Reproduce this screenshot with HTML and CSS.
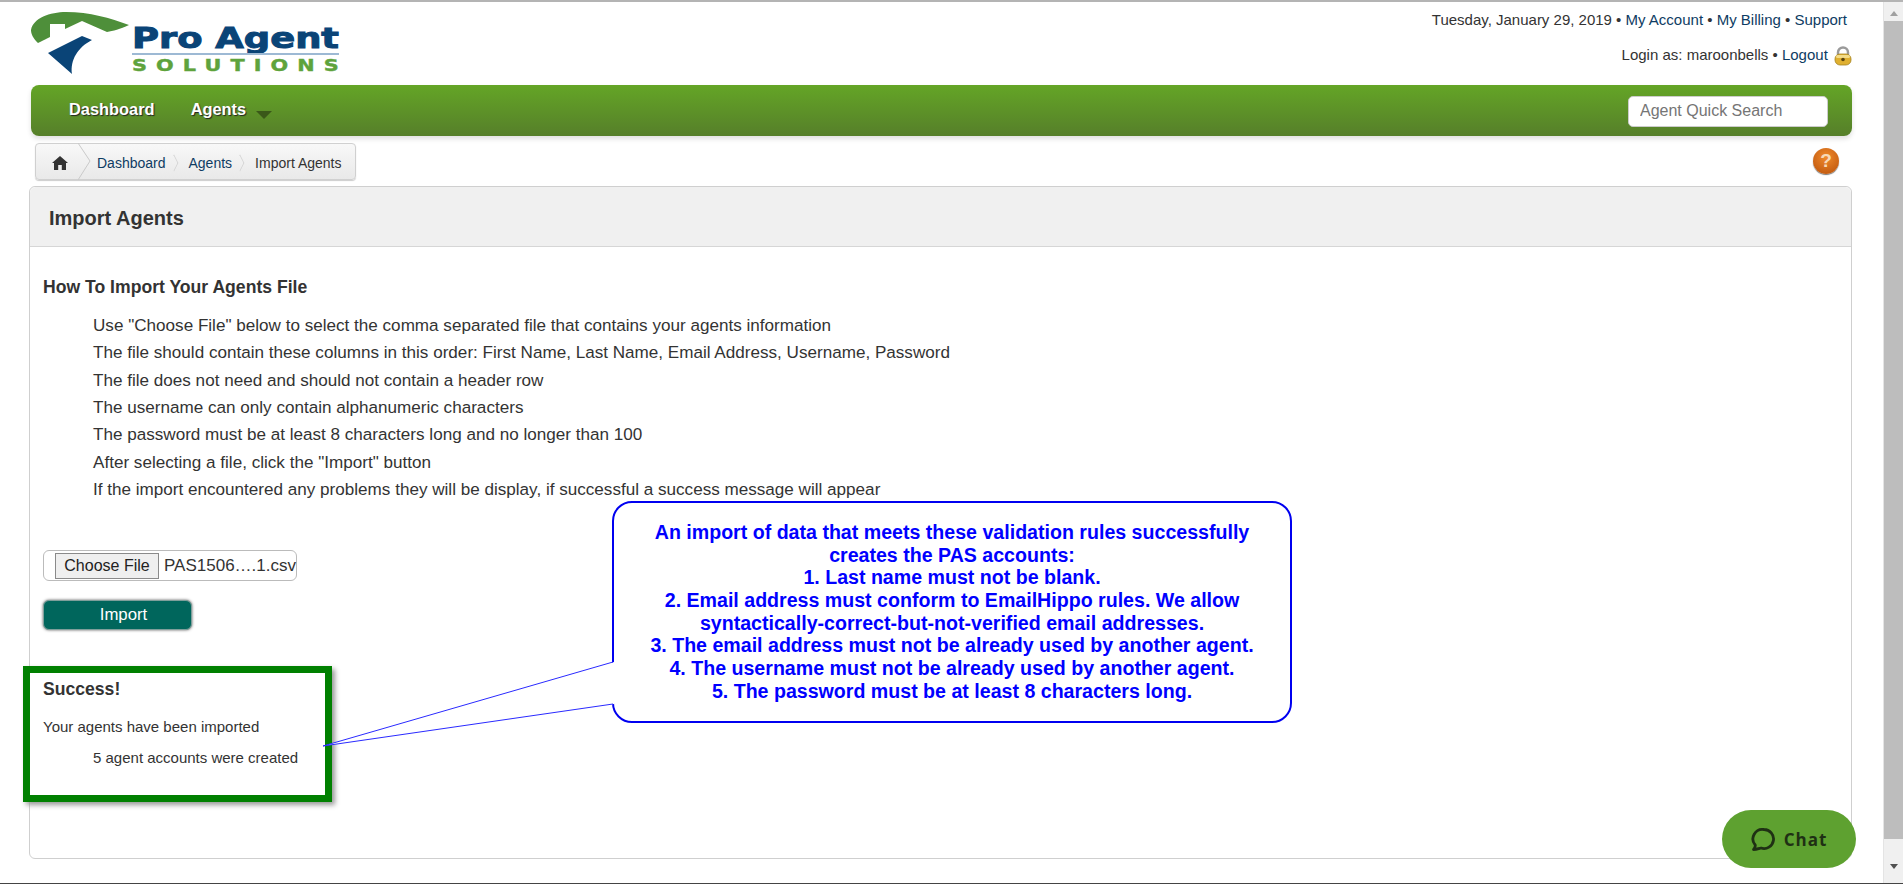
FILE: index.html
```html
<!DOCTYPE html>
<html>
<head lang="en">
    <meta charset="UTF-8">
    <title>Import Agents</title>
    <link rel="stylesheet" href="styles.css">
</head>
<body>
<div class="page">
    <div class="top">
        <svg class="logo" width="312" height="66" viewBox="30 10 312 66">
            <path fill="#4e8f3a" d="M31,30 C33,18 50,12 66,12 C90,12 110,18 129,25 C120,29 113,31 107,32 L82,21 L65,29 L65,24 L50,24 L50,37 L38,43 C33,38 31,34 31,30 Z"/>
            <path fill="#0a4477" d="M48,53 L82,36 L92,40 C78,47 70,60 72,74 Z"/>
            <text class="logo-pro" x="132" y="48" textLength="207" lengthAdjust="spacingAndGlyphs">Pro Agent</text>
            <rect x="132" y="53" width="207" height="2" fill="#9db9d4"/>
            <text class="logo-sol" transform="translate(132 71) scale(1.300 1)" textLength="159">SOLUTIONS</text>
        </svg>
        <div class="account">
            <div class="account-row">Tuesday, January 29, 2019 • <a href="#">My Account</a> • <a href="#">My Billing</a> • <a href="#">Support</a></div>
            <div class="account-row login">Login as: maroonbells • <a href="#">Logout</a>
                <svg width="18" height="20" viewBox="0 0 18 20">
                    <path d="M4,10 V6.500 a5,5 0 0 1 10,0 V10" fill="none" stroke="#9a9a9a" stroke-width="2.500"/>
                    <rect x="1" y="8" width="16" height="11" rx="5" fill="#e0b030" stroke="#a58320" stroke-width="0.800"/>
                    <rect x="2" y="9" width="14" height="3" rx="1.500" fill="#f4dc88"/>
                    <circle cx="9" cy="13.500" r="1.800" fill="#5a4410"/>
                </svg>
            </div>
        </div>
    </div>

    <div class="nav">
        <a class="nav-item" href="#">Dashboard</a>
        <a class="nav-item" href="#">Agents</a>
        <span class="nav-arrow"></span>
        <input class="quick-search" type="text" placeholder="Agent Quick Search">
    </div>

    <div class="crumb-row">
        <div class="crumbs">
            <span class="crumb-home">
                <svg width="16" height="14" viewBox="0 0 16 14">
                    <path fill="#333" d="M8,0 L16,7 L14,7 L14,14 L9.800,14 L9.800,9 L6.200,9 L6.200,14 L2,14 L2,7 L0,7 Z"/>
                </svg>
            </span>
            <svg class="crumb-bigsep" width="14" height="37" viewBox="0 0 14 37">
                <path d="M0,0 L12,18 L0,37" fill="none" stroke="#c9c9c9"/>
            </svg>
            <a href="#">Dashboard</a>
            <span class="crumb-sep"></span>
            <a href="#">Agents</a>
            <span class="crumb-sep"></span>
            <span>Import Agents</span>
        </div>
        <span class="help">?</span>
    </div>

    <div class="panel">
        <div class="panel-head">Import Agents</div>
        <div class="panel-body">
            <h3 class="howto">How To Import Your Agents File</h3>
            <ul class="rules">
                <li>Use "Choose File" below to select the comma separated file that contains your agents information</li>
                <li>The file should contain these columns in this order: First Name, Last Name, Email Address, Username, Password</li>
                <li>The file does not need and should not contain a header row</li>
                <li>The username can only contain alphanumeric characters</li>
                <li>The password must be at least 8 characters long and no longer than 100</li>
                <li>After selecting a file, click the "Import" button</li>
                <li>If the import encountered any problems they will be display, if successful a success message will appear</li>
            </ul>
            <div class="file-field">
                <button class="file-btn" type="button">Choose File</button>
                <span class="file-name">PAS1506….1.csv</span>
            </div>
            <button class="import-btn" type="button">Import</button>
            <div class="result">
                <h3 class="result-title">Success!</h3>
                <p class="result-msg">Your agents have been imported</p>
                <p class="result-count">5 agent accounts were created</p>
            </div>
        </div>
    </div>

    <div class="callout">
        An import of data that meets these validation rules successfully<br>
        creates the PAS accounts:<br>
        1. Last name must not be blank.<br>
        2. Email address must conform to EmailHippo rules. We allow<br>
        syntactically-correct-but-not-verified email addresses.<br>
        3. The email address must not be already used by another agent.<br>
        4. The username must not be already used by another agent.<br>
        5. The password must be at least 8 characters long.
    </div>
    <svg class="tail" width="294" height="90" viewBox="0 0 294 90">
        <path d="M292,1 L1,85 L292,43 Z" fill="#fff"/>
        <path d="M291,1 L1,85 L291,43" fill="none" stroke="#2a2aff" stroke-width="1"/>
    </svg>

    <a class="chat" href="#">
        <svg width="24" height="24" viewBox="0 0 24 24">
            <path d="M13,2.500 a9.500,9.500 0 1 1 -3,18.500 C8,21.500 5,22.500 2.500,22.500 C4,21 4.500,19.500 4.200,18 A9.500,9.500 0 0 1 13,2.500 Z" fill="none" stroke="#1f3014" stroke-width="2.800" stroke-linejoin="round"/>
        </svg>
        Chat
    </a>
</div>
<div class="scrollbar">
    <span class="scroll-up"></span>
    <span class="scroll-thumb"></span>
    <span class="scroll-down"></span>
</div>
</body>
</html>
```

FILE: styles.css
```css
* {
    margin: 0;
    padding: 0;
    box-sizing: border-box;
}
html, body {
    height: 884px;
    overflow: hidden;
}
body {
    display: flex;
    background: #fff;
    border-top: 2px solid #b4b4b4;
    border-bottom: 1px solid #444;
    font-family: "Liberation Sans", Arial, sans-serif;
    font-size: 15px;
    color: #333;
}
a {
    color: #0e3c63;
    text-decoration: none;
}

.page {
    position: relative;
    flex: 1;
    padding: 0 31px 0 29px;
}

/* header */
.top {
    display: flex;
    justify-content: space-between;
    height: 83px;
}
.logo {
    margin: 8px 0 0 1px;
}
.logo-pro {
    font: bold 29px "DejaVu Sans", sans-serif;
    fill: #0a4477;
    stroke: #0a4477;
    stroke-width: 1;
}
.logo-sol {
    font: bold 16px "DejaVu Sans", sans-serif;
    fill: #5ea33c;
    stroke: #5ea33c;
    stroke-width: 0.400;
}
.account {
    text-align: right;
}
.account-row {
    height: 34px;
    padding: 10px 5px 0 0;
    line-height: 16px;
}
.account-row.login {
    padding: 10px 0 0 0;
}
.login svg {
    vertical-align: -6px;
    margin-left: 2px;
}

/* nav bar */
.nav {
    display: flex;
    align-items: center;
    height: 51px;
    margin-left: 2px;
    padding: 0 24px 0 38px;
    border-radius: 8px;
    background: linear-gradient(#64a526, #567f2a);
    box-shadow: 0 3px 5px rgba(0, 0, 0, 0.12);
}
.nav-item {
    margin: 0 36px 3px 0;
    color: #fff;
    font-size: 16.400px;
    font-weight: bold;
    text-shadow: 1px 1px 1px #222;
}
.nav-arrow {
    width: 0;
    height: 0;
    margin: 8px 0 0 -26px;
    border: 8px solid transparent;
    border-top-color: #3a5819;
    border-bottom: 0;
}
.quick-search {
    width: 200px;
    height: 31px;
    margin: 1px 0 0 auto;
    padding: 0 11px;
    border: 1px solid #ccc;
    border-radius: 5px;
    font: 16px "Liberation Sans", Arial, sans-serif;
}
.quick-search::placeholder {
    color: #757575;
}

/* breadcrumb */
.crumb-row {
    display: flex;
    justify-content: space-between;
    align-items: center;
    height: 50px;
    padding: 0 13px 0 6px;
}
.crumbs {
    display: flex;
    align-items: center;
    width: 321px;
    height: 37px;
    margin-top: 1px;
    padding-top: 2px;
    border: 1px solid #d0d0d0;
    border-radius: 4px;
    background: linear-gradient(#f8f8f8, #e9e9e9);
    box-shadow: 0 1px 1px #ccc;
    font-size: 14px;
}
.crumb-home {
    display: flex;
    width: 42px;
    padding-left: 16px;
}
.crumb-bigsep {
    margin: -2px 5px 0 0;
}
.crumb-sep {
    width: 12px;
    height: 12px;
    margin: 0 9px 0 2px;
    border-top: 1px solid #d0d0d0;
    border-right: 1px solid #d0d0d0;
    transform: scaleX(0.500) rotate(45deg);
}
.help {
    width: 26px;
    height: 26px;
    border-radius: 50%;
    background: radial-gradient(circle at 50% 35%, #f08a2c, #b8500a);
    color: #f6d9b8;
    font-size: 19px;
    font-weight: bold;
    line-height: 26px;
    text-align: center;
    box-shadow: 0 1px 1px #777;
}

/* panel */
.panel {
    height: 673px;
    border: 1px solid #cfcfcf;
    border-radius: 6px;
}
.panel-head {
    height: 60px;
    padding: 1px 0 0 19px;
    border-bottom: 1px solid #d6d6d6;
    border-radius: 6px 6px 0 0;
    background: #f0f0f0;
    color: #333;
    font-size: 20px;
    font-weight: bold;
    line-height: 60px;
}
.panel-body {
    padding: 31px 13px 0;
}
.howto {
    font-size: 17.600px;
    line-height: 18px;
}
.rules {
    margin: 16px 0 0 50px;
    list-style: none;
    font-size: 17.100px;
    line-height: 27.330px;
}
.file-field {
    display: flex;
    align-items: center;
    width: 254px;
    height: 31px;
    margin-top: 47px;
    padding-left: 11px;
    border: 1px solid #bbb;
    border-radius: 6px;
    font-size: 17px;
    white-space: nowrap;
}
.file-btn {
    width: 106px;
    height: 26px;
    margin-right: 5px;
    border: 1px solid #8a8a8a;
    background: #efefef;
    color: #222;
    font: 16px "Liberation Sans", Arial, sans-serif;
}
.import-btn {
    display: block;
    width: 149px;
    height: 30px;
    margin-top: 19px;
    padding-left: 12px;
    border: 1px solid #7f9f9b;
    border-radius: 6px;
    background: #00665c;
    box-shadow: 0 0 3px #555;
    color: #fff;
    font: 16.800px "Liberation Sans", Arial, sans-serif;
}

/* green box drawn on the screenshot */
.result {
    width: 309px;
    height: 136px;
    margin: 36px 0 0 -20px;
    padding: 4px 0 0 13px;
    border: 7px solid #008000;
    box-shadow: 3px 3px 5px #999;
}
.result-title {
    font-size: 17.600px;
    line-height: 24px;
}
.result-msg {
    margin-top: 18px;
    font-size: 15px;
    line-height: 16px;
}
.result-count {
    margin: 15px 0 0 50px;
    font-size: 15px;
    line-height: 16px;
}

/* callout drawn on the screenshot */
.callout {
    position: absolute;
    left: 612px;
    top: 499px;
    width: 680px;
    height: 222px;
    padding-top: 18px;
    border: 2px solid #0000f0;
    border-radius: 20px;
    background: #fff;
    color: #0000ff;
    font-size: 19.600px;
    font-weight: bold;
    line-height: 22.660px;
    text-align: center;
}
.tail {
    position: absolute;
    left: 322px;
    top: 659px;
}

.chat {
    position: absolute;
    left: 1722px;
    top: 808px;
    display: flex;
    align-items: center;
    justify-content: center;
    gap: 9px;
    width: 134px;
    height: 58px;
    border-radius: 29px;
    background: #5ea130;
    color: #1f3014;
    font: bold 17px "Open Sans", sans-serif;
    letter-spacing: 1px;
}

/* window scrollbar */
.scrollbar {
    display: flex;
    flex-direction: column;
    align-items: center;
    width: 20px;
    background: #f0f0f0;
    border-left: 1px solid #e4e4e4;
}
.scroll-up {
    width: 0;
    height: 0;
    margin: 9px 0 5px;
    border: 4px solid transparent;
    border-top: 0;
    border-bottom: 5px solid #a0a0a0;
}
.scroll-thumb {
    align-self: stretch;
    height: 818px;
    background: #bdbdbd;
}
.scroll-down {
    width: 0;
    height: 0;
    margin-top: 25px;
    border: 4px solid transparent;
    border-bottom: 0;
    border-top: 5px solid #505050;
}
```
